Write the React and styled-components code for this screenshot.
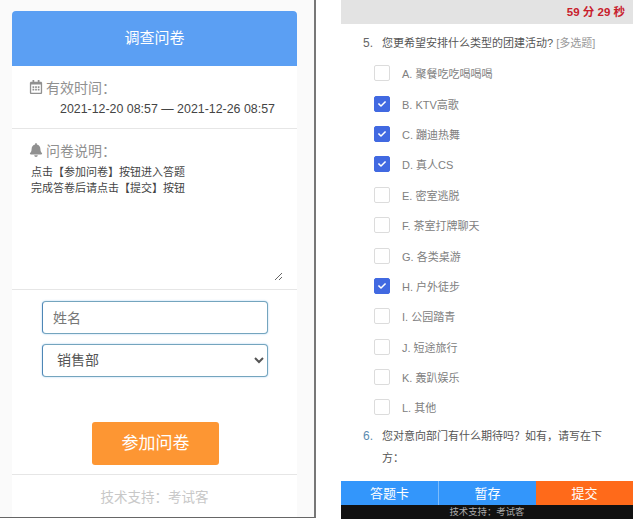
import React from "react";
import styled, { createGlobalStyle } from "styled-components";
import { FaBell, FaRegCalendarAlt, FaCheck } from "react-icons/fa";

const FONT = `"Liberation Sans", "Noto Sans CJK SC", sans-serif`;

const OPTIONS = [
  { label: "A. 聚餐吃吃喝喝喝" },
  { label: "B. KTV高歌", checked: true },
  { label: "C. 蹦迪热舞", checked: true },
  { label: "D. 真人CS", checked: true },
  { label: "E. 密室逃脱" },
  { label: "F. 茶室打牌聊天" },
  { label: "G. 各类桌游" },
  { label: "H. 户外徒步", checked: true },
  { label: "I. 公园踏青" },
  { label: "J. 短途旅行" },
  { label: "K. 轰趴娱乐" },
  { label: "L. 其他" },
];

const App = () => {
  return (
    <Page>
      <GlobalStyle />
      <LeftPanel>
        <Card>
          <CardHeader>调查问卷</CardHeader>
          <ValiditySection>
            <SectionTitle>
              <FaRegCalendarAlt size={14} />
              <span>有效时间：</span>
            </SectionTitle>
            <DateRange>2021-12-20 08:57 — 2021-12-26 08:57</DateRange>
          </ValiditySection>
          <NoteSection>
            <SectionTitle>
              <FaBell size={14} />
              <span>问卷说明：</span>
            </SectionTitle>
            <NoteText
              readOnly
              defaultValue={"点击【参加问卷】按钮进入答题\n完成答卷后请点击【提交】按钮"}
            />
          </NoteSection>
          <JoinForm>
            <NameInput type="text" placeholder="姓名" />
            <DepartmentSelect defaultValue="销售部">
              <option>销售部</option>
              <option>技术部</option>
              <option>市场部</option>
            </DepartmentSelect>
            <JoinButton type="button">参加问卷</JoinButton>
          </JoinForm>
          <CardFooter>技术支持：考试客</CardFooter>
        </Card>
      </LeftPanel>
      <RightPanel>
        <TimerBar>59 分 29 秒</TimerBar>
        <QuestionRow>
          <QuestionNumber>5.</QuestionNumber>
          <QuestionText>
            您更希望安排什么类型的团建活动? <QuestionType>[多选题]</QuestionType>
          </QuestionText>
        </QuestionRow>
        <OptionList>
          {OPTIONS.map((option) => (
            <OptionRow key={option.label}>
              <CheckBox $checked={option.checked}>
                {option.checked && <FaCheck size={8} />}
              </CheckBox>
              <OptionLabel>{option.label}</OptionLabel>
            </OptionRow>
          ))}
        </OptionList>
        <QuestionSix>
          <QuestionNumber $blue>6.</QuestionNumber>
          <QuestionText>您对意向部门有什么期待吗？如有，请写在下方：</QuestionText>
        </QuestionSix>
        <ActionBar>
          <ActionButton>答题卡</ActionButton>
          <ActionButton $divider>暂存</ActionButton>
          <ActionButton $submit>提交</ActionButton>
        </ActionBar>
        <SupportBar>技术支持：考试客</SupportBar>
      </RightPanel>
    </Page>
  );
};

const GlobalStyle = createGlobalStyle`
  html, body {
    margin: 0;
    padding: 0;
    background: #fff;
    overflow: hidden;
  }
  * {
    box-sizing: border-box;
  }
`;

const Page = styled.div`
  display: flex;
  width: 640px;
  height: 519px;
  overflow: hidden;
  font-family: ${FONT};
`;

const LeftPanel = styled.div`
  width: 316px;
  height: 518px;
  padding: 11px 0 0 12px;
  background: #fafafa;
  border-right: 2px solid #777;
  border-bottom: 1px solid #666;
  overflow: hidden;
`;

const Card = styled.div`
  width: 285px;
  background: #fff;
  display: flex;
  flex-direction: column;
`;

const CardHeader = styled.div`
  height: 55px;
  background: #5b9ff3;
  border-radius: 4px 4px 0 0;
  color: #fff;
  font-size: 15px;
  line-height: 54px;
  text-align: center;
`;

const ValiditySection = styled.div`
  height: 63px;
  padding: 10px 0 0 17px;
  border-bottom: 1px solid #e6e6e6;
`;

const SectionTitle = styled.div`
  display: flex;
  align-items: center;
  gap: 3px;
  height: 22px;
  color: #909090;
  font-size: 14px;
`;

const DateRange = styled.div`
  margin: 2px 0 0 31px;
  color: #444;
  font-size: 12.4px;
  line-height: 18px;
  white-space: nowrap;
`;

const NoteSection = styled.div`
  height: 161px;
  padding: 10px 0 0 17px;
  border-bottom: 1px solid #e6e6e6;
`;

const NoteText = styled.textarea`
  display: block;
  width: 252px;
  height: 117px;
  margin: 3px 0 0 2px;
  padding: 0;
  border: none;
  outline: none;
  color: #444;
  font-family: ${FONT};
  font-size: 11px;
  line-height: 16px;
  resize: vertical;
`;

const JoinForm = styled.div`
  height: 185px;
  padding: 11px 0 0 30px;
  border-bottom: 1px solid #e6e6e6;
`;

const NameInput = styled.input`
  display: block;
  width: 226px;
  height: 33px;
  padding: 0 10px;
  border: 1px solid #74a5be;
  border-left-color: #4d86b5;
  border-radius: 4px;
  box-shadow: 0 0 2px rgba(102, 175, 233, 0.6);
  outline: none;
  font-family: ${FONT};
  font-size: 14px;
  &::placeholder {
    color: #777;
    opacity: 1;
  }
`;

const DepartmentSelect = styled.select`
  display: block;
  width: 226px;
  height: 33px;
  margin-top: 10px;
  padding: 0 10px 2px;
  background: #fff;
  border: 1px solid #74a5be;
  border-left-color: #4d86b5;
  border-radius: 4px;
  box-shadow: 0 0 2px rgba(102, 175, 233, 0.6);
  outline: none;
  color: #555;
  font-family: ${FONT};
  font-size: 14px;
`;

const JoinButton = styled.button`
  display: block;
  width: 127px;
  height: 43px;
  margin: 45px 0 0 50px;
  padding: 0 0 4px;
  background: #fd9633;
  border: none;
  border-radius: 3px;
  color: #fff;
  font-family: ${FONT};
  font-size: 17px;
`;

const CardFooter = styled.div`
  height: 44px;
  padding-top: 14px;
  color: #c8c8c8;
  font-size: 13.5px;
  line-height: 18px;
  text-align: center;
`;

const RightPanel = styled.div`
  width: 292px;
  height: 519px;
  margin-left: 25px;
  display: flex;
  flex-direction: column;
`;

const TimerBar = styled.div`
  flex: none;
  height: 24px;
  padding-right: 8px;
  background: #e3e3e3;
  color: #c8202c;
  font-size: 11.5px;
  font-weight: bold;
  line-height: 24px;
  text-align: right;
`;

const QuestionRow = styled.div`
  display: flex;
  flex: none;
  margin-top: 8px;
  line-height: 22px;
`;

const QuestionNumber = styled.span`
  flex: none;
  width: 41px;
  padding-left: 22px;
  color: ${(props) => (props.$blue ? "#5c8bb0" : "#666")};
  font-size: 12px;
`;

const QuestionText = styled.span`
  width: 222px;
  color: #555;
  font-size: 11px;
`;

const QuestionType = styled.span`
  color: #999;
`;

const OptionList = styled.div`
  display: flex;
  flex: none;
  flex-direction: column;
  margin-top: 4px;
`;

const OptionRow = styled.div`
  display: flex;
  align-items: center;
  height: 30.4px;
  padding-left: 33px;
`;

const CheckBox = styled.span`
  display: flex;
  align-items: center;
  justify-content: center;
  width: 16px;
  height: 16px;
  background: ${(props) => (props.$checked ? "#4169e1" : "#fff")};
  border: 1px solid ${(props) => (props.$checked ? "#4169e1" : "#dcdcdc")};
  border-radius: 2px;
  color: #fff;
`;

const OptionLabel = styled.span`
  margin-left: 12px;
  color: #808080;
  font-size: 11px;
`;

const QuestionSix = styled(QuestionRow)`
  margin-top: 2px;
  height: 44px;
`;

const ActionBar = styled.div`
  display: flex;
  flex: none;
  height: 24px;
  margin-top: auto;
`;

const ActionButton = styled.div`
  flex: 1;
  padding-top: 1px;
  background: ${(props) => (props.$submit ? "#ff6a1a" : "#3396fb")};
  border-left: ${(props) => (props.$divider ? "1px solid #7dbcfb" : "none")};
  color: #fff;
  font-size: 13px;
  line-height: 24px;
  text-align: center;
`;

const SupportBar = styled.div`
  flex: none;
  height: 14px;
  background: #111;
  color: #aaa;
  font-size: 9.4px;
  line-height: 14px;
  text-align: center;
`;

export default App;
